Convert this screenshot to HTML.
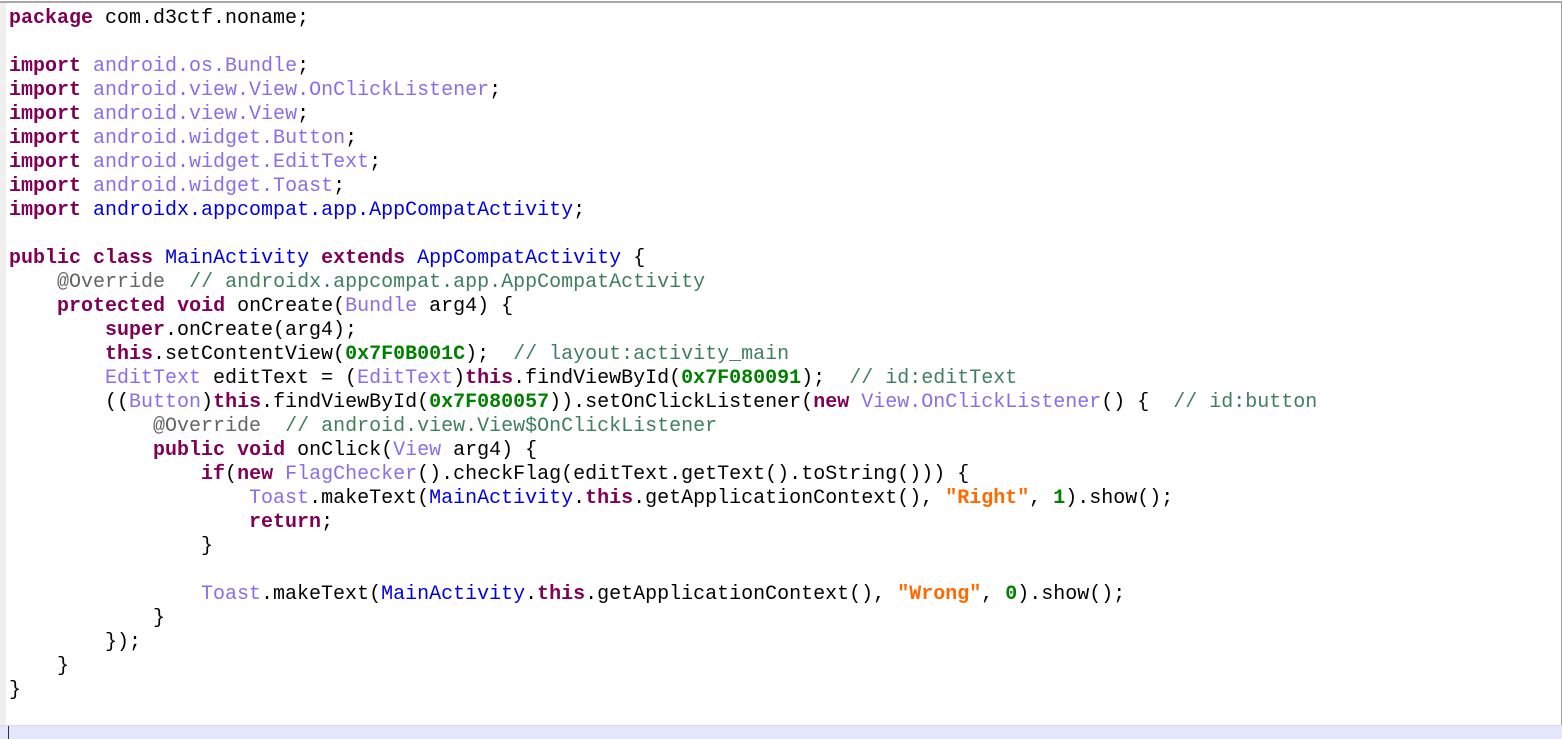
<!DOCTYPE html>
<html><head><meta charset="utf-8">
<style>
html,body{margin:0;padding:0;width:1562px;height:739px;overflow:hidden;background:#fff;position:relative}
#top{position:absolute;left:0;top:1px;width:1562px;height:2px;background:#a8a8a8}
#gut{position:absolute;left:0;top:3px;width:6px;height:722px;background:#f0f0f0}
#right{position:absolute;right:0;top:3px;width:1px;height:722px;background:#a0a0a0}
#bot{position:absolute;left:0;top:725px;width:1562px;height:14px;background:#e6e6fa;border-top:1px solid #d8d8e8}
#botl{position:absolute;left:8px;top:726px;width:1px;height:13px;background:#333}
pre{position:absolute;left:9px;top:7px;margin:0;font-family:"Liberation Mono",monospace;font-size:20px;line-height:24px;color:#000}
.k{color:#7f0055;font-weight:bold}
.t{color:#8a6ee6}
.b{color:#0000e0}
.a{color:#646464}
.c{color:#3f7f5f}
.n{color:#008000;font-weight:bold}
.s{color:#ff6a00;font-weight:bold}
</style></head><body>
<div id="top"></div><div id="gut"></div><div id="right"></div><div id="bot"></div><div id="botl"></div>
<pre><span class="k">package</span> com.d3ctf.noname;

<span class="k">import</span> <span class="t">android.os.Bundle</span>;
<span class="k">import</span> <span class="t">android.view.View.OnClickListener</span>;
<span class="k">import</span> <span class="t">android.view.View</span>;
<span class="k">import</span> <span class="t">android.widget.Button</span>;
<span class="k">import</span> <span class="t">android.widget.EditText</span>;
<span class="k">import</span> <span class="t">android.widget.Toast</span>;
<span class="k">import</span> <span class="b">androidx.appcompat.app.AppCompatActivity</span>;

<span class="k">public</span> <span class="k">class</span> <span class="b">MainActivity</span> <span class="k">extends</span> <span class="b">AppCompatActivity</span> {
    <span class="a">@Override</span>  <span class="c">// androidx.appcompat.app.AppCompatActivity</span>
    <span class="k">protected</span> <span class="k">void</span> onCreate(<span class="t">Bundle</span> arg4) {
        <span class="k">super</span>.onCreate(arg4);
        <span class="k">this</span>.setContentView(<span class="n">0x7F0B001C</span>);  <span class="c">// layout:activity_main</span>
        <span class="t">EditText</span> editText = (<span class="t">EditText</span>)<span class="k">this</span>.findViewById(<span class="n">0x7F080091</span>);  <span class="c">// id:editText</span>
        ((<span class="t">Button</span>)<span class="k">this</span>.findViewById(<span class="n">0x7F080057</span>)).setOnClickListener(<span class="k">new</span> <span class="t">View.OnClickListener</span>() {  <span class="c">// id:button</span>
            <span class="a">@Override</span>  <span class="c">// android.view.View$OnClickListener</span>
            <span class="k">public</span> <span class="k">void</span> onClick(<span class="t">View</span> arg4) {
                <span class="k">if</span>(<span class="k">new</span> <span class="t">FlagChecker</span>().checkFlag(editText.getText().toString())) {
                    <span class="t">Toast</span>.makeText(<span class="b">MainActivity</span>.<span class="k">this</span>.getApplicationContext(), <span class="s">"Right"</span>, <span class="n">1</span>).show();
                    <span class="k">return</span>;
                }

                <span class="t">Toast</span>.makeText(<span class="b">MainActivity</span>.<span class="k">this</span>.getApplicationContext(), <span class="s">"Wrong"</span>, <span class="n">0</span>).show();
            }
        });
    }
}</pre>
</body></html>
